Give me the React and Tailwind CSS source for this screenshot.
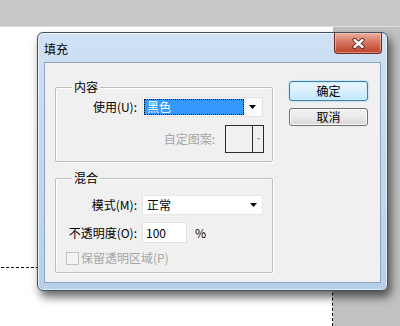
import React from "react";

const font = "font-['Noto_Sans_CJK_SC','Noto_Sans',sans-serif]";

const Arrow = () => (
  <svg width="7" height="4" viewBox="0 0 7 4" className="shrink-0">
    <path d="M0 0h7L3.5 4z" fill="#000" />
  </svg>
);

const GroupBox = ({ title, className, children }) => (
  <div
    className={`relative rounded-[2px] border border-[#bdbdbd] shadow-[inset_1px_1px_0_#fff,1px_1px_0_#fff] ${className}`}
  >
    <span className="absolute left-[16px] -top-[8px] bg-[#f0f0f0] px-[2px] text-[12px] leading-[14px] text-black">
      {title}
    </span>
    {children}
  </div>
);

const Label = ({ children }) => (
  <span className="w-[81px] shrink-0 whitespace-nowrap text-right text-[12px] leading-[14px] text-black">
    {children}
  </span>
);

const WinButton = ({ children, focused }) => (
  <button
    className={`flex w-[79px] items-center justify-center rounded-[3px] border text-[12px] leading-[14px] text-black ${
      focused
        ? "h-[20px] border-[#3c7fb1] bg-gradient-to-b from-[#eaf6fd] via-[#d9f0fc] to-[#bee6fd] shadow-[0_0_2px_#7dc3e8,inset_0_0_0_1px_#cdeefb]"
        : "h-[18px] border-[#707070] bg-gradient-to-b from-[#f2f2f2] via-[#ebebeb] to-[#d5d5d5] shadow-[inset_0_0_0_1px_#fcfcfc]"
    }`}
  >
    {children}
  </button>
);

export default function App() {
  return (
    <div className={`relative h-[326px] w-[400px] overflow-hidden bg-[#c1c1c1] ${font}`}>
      {/* top bar */}
      <div className="h-[27px] border-b border-[#dedede] bg-[#c8c8c8]" />

      {/* canvas */}
      <div className="relative h-[299px] w-[333px] bg-white">
        <div className="absolute left-[-4px] top-[240px] h-[100px] w-[337px] border-t border-r border-dashed border-black" />
      </div>

      {/* dialog */}
      <div className="absolute left-[37px] top-[32px] flex h-[259px] w-[351px] flex-col rounded-[6px] border border-[#44525f] bg-gradient-to-b from-[#cfe1f4] to-[#b7d0ea] shadow-[3px_6px_10px_rgba(0,0,0,0.6),inset_0_0_0_1px_rgba(255,255,255,0.6)]">
        {/* title bar */}
        <div className="flex h-[29px] items-start pl-[6px]">
          <span className="pt-[9px] text-[12px] leading-[14px] text-black">填充</span>
          <button className="ml-auto mr-[5px] flex h-[21px] w-[48px] items-center justify-center rounded-b-[4px] border border-t-0 border-[#6b2a22] bg-gradient-to-b from-[#eab0a2] via-[#d4705a] to-[#c0402a] shadow-[inset_0_0_0_1px_rgba(255,210,200,0.5)]">
            <svg width="13" height="11" viewBox="0 0 13 11">
              <path d="M2.5 2l8 7M10.5 2l-8 7" stroke="#5a2018" strokeWidth="4.2" strokeLinecap="round" />
              <path d="M2.5 2l8 7M10.5 2l-8 7" stroke="#fff" strokeWidth="2.4" strokeLinecap="round" />
            </svg>
          </button>
        </div>

        {/* client area */}
        <div className="mx-[6px] mb-[7px] flex flex-1 items-start border border-[#8ea3bd] bg-[#f0f0f0] pl-[10px]">
          {/* left column */}
          <div className="mt-[24px] flex w-[218px] flex-col">
            <GroupBox title="内容" className="h-[75px] pt-[9px]">
              <div className="flex items-center">
                <Label>使用(U):</Label>
                <div className="ml-[5px] flex h-[20px] w-[121px] items-center border border-[#e2e2e2] bg-[#fbfbfb] p-[1px]">
                  <div className="flex h-full w-[100px] items-center border border-dotted border-black bg-[#3399ff] pl-[2px] text-[12px] leading-[14px] text-white">
                    黑色
                  </div>
                  <div className="flex flex-1 items-center justify-end pr-[5px]">
                    <Arrow />
                  </div>
                </div>
              </div>
              <div className="mt-[8px] flex items-center justify-end pr-[8px]">
                <span className="mr-[10px] text-[12px] leading-[14px] text-[#a6a6a6]">自定图案:</span>
                <div className="flex h-[28px] w-[39px] border border-[#2b2b2b] bg-[#f0f0f0]">
                  <div className="w-[27px] border-r border-[#2b2b2b]" />
                  <div className="flex flex-1 items-center justify-center">
                    <svg width="3" height="2" viewBox="0 0 3 2">
                      <path d="M0 0h3L1.5 2z" fill="#9a9a9a" />
                    </svg>
                  </div>
                </div>
              </div>
            </GroupBox>

            <GroupBox title="混合" className="mt-[16px] h-[95px] pt-[16px]">
              <div className="flex items-center">
                <Label>模式(M):</Label>
                <div className="ml-[5px] flex h-[20px] w-[121px] items-center border border-[#e6e6e6] bg-white pl-[4px] pr-[5px] text-[12px] leading-[14px] text-black">
                  <span>正常</span>
                  <span className="ml-auto">
                    <Arrow />
                  </span>
                </div>
              </div>
              <div className="mt-[7px] flex items-center">
                <Label>不透明度(O):</Label>
                <div className="ml-[5px] flex h-[21px] w-[45px] items-center border border-[#e0e0e0] bg-white pl-[3px] text-[12px] leading-[14px] text-black">
                  100
                </div>
                <span className="ml-[8px] text-[12px] leading-[14px] text-black">%</span>
              </div>
              <div className="mt-[8px] flex items-center pl-[10px]">
                <span className="h-[13px] w-[13px] border border-[#c2c2c2] bg-[#f4f4f4]" />
                <span className="ml-[2px] text-[12px] leading-[14px] text-[#a6a6a6]">保留透明区域(P)</span>
              </div>
            </GroupBox>
          </div>

          {/* right column */}
          <div className="ml-[16px] mt-[18px] flex flex-col gap-[7px]">
            <WinButton focused>确定</WinButton>
            <WinButton>取消</WinButton>
          </div>
        </div>
      </div>
    </div>
  );
}
